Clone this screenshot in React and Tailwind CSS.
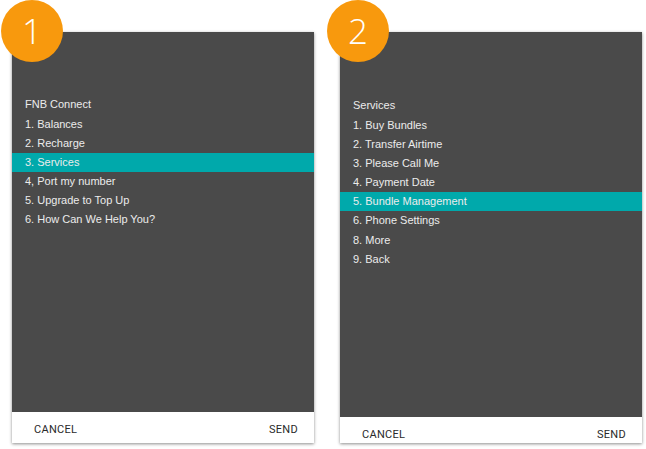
import React from "react";

const font = { fontFamily: '"Liberation Sans", Arial, sans-serif' };

function Panel({ title, items, active, topPad, darkH, footH, footPt }) {
  return (
    <div className="w-[302px] h-[411px] flex flex-col shadow-[0_1px_3px_rgba(0,0,0,0.45)]">
      <div className={`bg-[#4a4a4a] flex flex-col ${darkH} ${topPad}`}>
        <div className="h-[19.2px] flex items-center px-[13px] text-[11px] text-[#ececec]" style={font}>
          {title}
        </div>
        {items.map((it, i) => (
          <div
            key={i}
            className={`h-[19.2px] flex items-center px-[13px] text-[11px] text-[#ececec] ${
              i === active ? "bg-[#00a9ab]" : ""
            }`}
            style={font}
          >
            {it}
          </div>
        ))}
      </div>
      <div
        className={`bg-white flex justify-between pl-[22px] pr-[16px] text-[11px] text-[#2a2a2a] tracking-[0.3px] ${footH} ${footPt}`}
        style={{ fontFamily: 'Roboto, "Liberation Sans", sans-serif' }}
      >
        <span>CANCEL</span>
        <span>SEND</span>
      </div>
    </div>
  );
}

function Badge({ n, left }) {
  return (
    <div
      className={`absolute top-0 ${left} w-[62px] h-[62px] rounded-full bg-[#f8990d] flex items-center justify-center text-white text-[35px] font-light`}
      style={{ fontFamily: '"Open Sans", "Liberation Sans", sans-serif' }}
    >
      <span className="leading-none -mt-[1px]">{n}</span>
    </div>
  );
}

export default function App() {
  return (
    <div className="relative w-[646px] h-[449px] bg-white">
      <div className="flex gap-[26px] pl-[12px] pt-[32px]">
        <Panel
          title="FNB Connect"
          items={[
            "1. Balances",
            "2. Recharge",
            "3. Services",
            "4, Port my number",
            "5. Upgrade to Top Up",
            "6. How Can We Help You?",
          ]}
          active={2}
          topPad="pt-[63px]"
          darkH="h-[380px]"
          footH="h-[31px]"
          footPt="pt-[10px]"
        />
        <Panel
          title="Services"
          items={[
            "1. Buy Bundles",
            "2. Transfer Airtime",
            "3. Please Call Me",
            "4. Payment Date",
            "5. Bundle Management",
            "6. Phone Settings",
            "8. More",
            "9. Back",
          ]}
          active={4}
          topPad="pt-[64px]"
          darkH="h-[385px]"
          footH="h-[26px]"
          footPt="pt-[10px]"
        />
      </div>
      <Badge n="1" left="left-[1px]" />
      <Badge n="2" left="left-[327px]" />
    </div>
  );
}
